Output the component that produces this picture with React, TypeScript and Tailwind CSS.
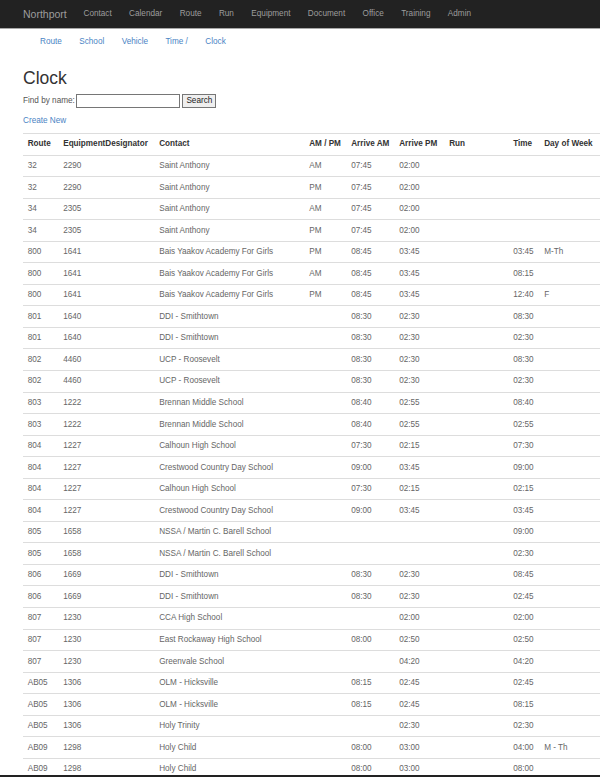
import React from "react";

type Row = [string, string, string, string, string, string, string, string, string];

const rows: Row[] = [
  ["32", "2290", "Saint Anthony", "AM", "07:45", "02:00", "", "", ""],
  ["32", "2290", "Saint Anthony", "PM", "07:45", "02:00", "", "", ""],
  ["34", "2305", "Saint Anthony", "AM", "07:45", "02:00", "", "", ""],
  ["34", "2305", "Saint Anthony", "PM", "07:45", "02:00", "", "", ""],
  ["800", "1641", "Bais Yaakov Academy For Girls", "PM", "08:45", "03:45", "", "03:45", "M-Th"],
  ["800", "1641", "Bais Yaakov Academy For Girls", "AM", "08:45", "03:45", "", "08:15", ""],
  ["800", "1641", "Bais Yaakov Academy For Girls", "PM", "08:45", "03:45", "", "12:40", "F"],
  ["801", "1640", "DDI - Smithtown", "", "08:30", "02:30", "", "08:30", ""],
  ["801", "1640", "DDI - Smithtown", "", "08:30", "02:30", "", "02:30", ""],
  ["802", "4460", "UCP - Roosevelt", "", "08:30", "02:30", "", "08:30", ""],
  ["802", "4460", "UCP - Roosevelt", "", "08:30", "02:30", "", "02:30", ""],
  ["803", "1222", "Brennan Middle School", "", "08:40", "02:55", "", "08:40", ""],
  ["803", "1222", "Brennan Middle School", "", "08:40", "02:55", "", "02:55", ""],
  ["804", "1227", "Calhoun High School", "", "07:30", "02:15", "", "07:30", ""],
  ["804", "1227", "Crestwood Country Day School", "", "09:00", "03:45", "", "09:00", ""],
  ["804", "1227", "Calhoun High School", "", "07:30", "02:15", "", "02:15", ""],
  ["804", "1227", "Crestwood Country Day School", "", "09:00", "03:45", "", "03:45", ""],
  ["805", "1658", "NSSA / Martin C. Barell School", "", "", "", "", "09:00", ""],
  ["805", "1658", "NSSA / Martin C. Barell School", "", "", "", "", "02:30", ""],
  ["806", "1669", "DDI - Smithtown", "", "08:30", "02:30", "", "08:45", ""],
  ["806", "1669", "DDI - Smithtown", "", "08:30", "02:30", "", "02:45", ""],
  ["807", "1230", "CCA High School", "", "", "02:00", "", "02:00", ""],
  ["807", "1230", "East Rockaway High School", "", "08:00", "02:50", "", "02:50", ""],
  ["807", "1230", "Greenvale School", "", "", "04:20", "", "04:20", ""],
  ["AB05", "1306", "OLM - Hicksville", "", "08:15", "02:45", "", "02:45", ""],
  ["AB05", "1306", "OLM - Hicksville", "", "08:15", "02:45", "", "08:15", ""],
  ["AB05", "1306", "Holy Trinity", "", "", "02:30", "", "02:30", ""],
  ["AB09", "1298", "Holy Child", "", "08:00", "03:00", "", "04:00", "M - Th"],
  ["AB09", "1298", "Holy Child", "", "08:00", "03:00", "", "08:00", ""],
];

const headers = [
  "Route",
  "EquipmentDesignator",
  "Contact",
  "AM / PM",
  "Arrive AM",
  "Arrive PM",
  "Run",
  "Time",
  "Day of Week",
];

const navItems = ["Contact", "Calendar", "Route", "Run", "Equipment", "Document", "Office", "Training", "Admin"];
const subItems = ["Route", "School", "Vehicle", "Time /", "Clock"];

export default function App() {
  return (
    <div className="min-h-[777px] bg-white text-[#555] font-['Liberation_Sans',Arial,sans-serif]">
      {/* Navbar */}
      <div className="h-[29px] bg-[#222] border-b border-[#a8a8a8] flex items-center">
        <span className="ml-[23px] text-[10.5px] text-[#9d9d9d] leading-none">Northport</span>
        <div className="flex ml-[8px]">
          {navItems.map((n) => (
            <span key={n} className="px-[8.7px] text-[8.2px] text-[#9d9d9d] leading-none">
              {n}
            </span>
          ))}
        </div>
      </div>

      {/* Sub nav */}
      <div className="h-[26px] flex items-center pt-[1px] pl-[31.3px]">
        {subItems.map((s) => (
          <span key={s} className="px-[8.7px] text-[8.2px] text-[#4a84c4] leading-none">
            {s}
          </span>
        ))}
      </div>

      <div className="pl-[23px]">
        <h2 className="mt-[13px] text-[17.5px] leading-[20px] text-[#333] font-normal">Clock</h2>
        <div className="mt-[6px] flex items-center h-[14px] text-[8.2px] text-[#555]">
          <span>Find by name:</span>
          <input
            type="text"
            className="ml-[1.5px] w-[104px] h-[14px] border border-[#767676] bg-white outline-none"
          />
          <button className="ml-[2px] w-[34px] h-[14px] border border-[#767676] bg-[#efefef] text-[8.2px] text-[#222] leading-none">
            Search
          </button>
        </div>
        <div className="mt-[7.2px] text-[8.2px] leading-[11.7px] text-[#4a84c4]">Create New</div>

        <table className="mt-[6.1px] w-[577px] table-fixed border-collapse text-[8.17px]">
          <colgroup>
            <col className="w-[35.5px]" />
            <col className="w-[96px]" />
            <col className="w-[150px]" />
            <col className="w-[42px]" />
            <col className="w-[48px]" />
            <col className="w-[50px]" />
            <col className="w-[64px]" />
            <col className="w-[31px]" />
            <col />
          </colgroup>
          <thead>
            <tr>
              {headers.map((h) => (
                <th
                  key={h}
                  className="text-left font-bold text-[#333] whitespace-nowrap px-[4.7px] py-[4.45px] leading-[11.67px] border-t border-[#ddd]"
                >
                  {h}
                </th>
              ))}
            </tr>
          </thead>
          <tbody>
            {rows.map((r, i) => (
              <tr key={i}>
                {r.map((c, j) => (
                  <td
                    key={j}
                    className="px-[4.7px] py-[4.45px] leading-[11.67px] border-t border-[#ddd] whitespace-nowrap text-[#666]"
                  >
                    {c}
                  </td>
                ))}
              </tr>
            ))}
          </tbody>
        </table>
      </div>
      <div className="fixed left-0 right-0 bottom-0 h-[2px] bg-[#222]" />
    </div>
  );
}
